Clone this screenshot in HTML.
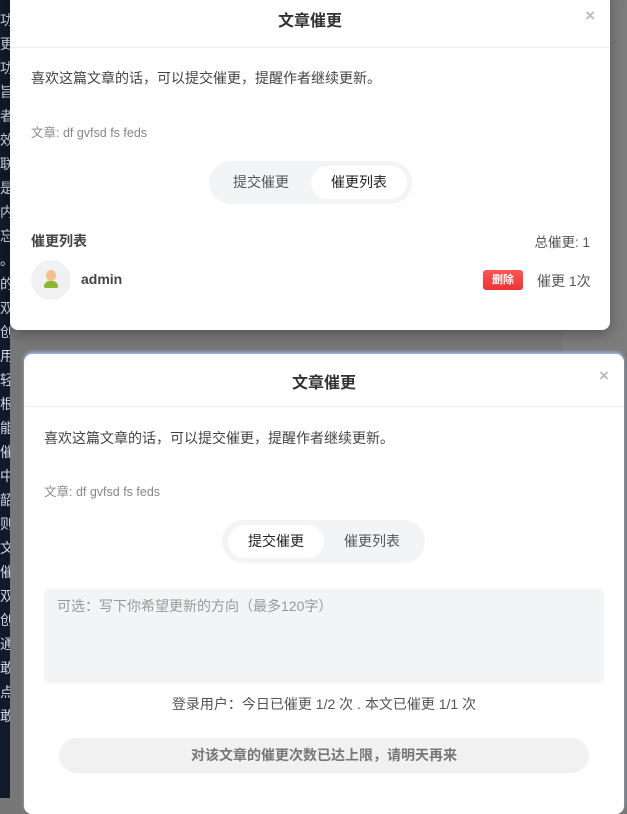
<!DOCTYPE html>
<html><head><meta charset="utf-8"><style>
*{margin:0;padding:0;box-sizing:border-box}
body{width:627px;height:798px;overflow:hidden;background:#777;position:relative;font-family:"Liberation Sans","Noto Sans CJK SC",sans-serif;color:#333}
.left{position:absolute;left:0;top:0;width:10px;height:798px;background:#111a2a;overflow:hidden;color:#cfd8ea;font-size:14px;line-height:24px;padding-top:8px}
.rgt{position:absolute;left:562px;top:0;width:65px;height:354px;background:#7c7c7c}
.m{position:absolute;background:#fff;border-radius:8px;box-shadow:0 4px 14px rgba(0,0,0,.3)}
.t{position:absolute;left:0;right:0;text-align:center;font-size:16px;font-weight:bold;color:#333}
.x{position:absolute;font-size:17px;color:#bbb;font-weight:bold}
.hl{position:absolute;left:0;right:0;height:1px;background:#eee}
.p{position:absolute;font-size:14px;color:#444}
.a{position:absolute;font-size:12.5px;color:#888}
.tabs{position:absolute;background:#f3f4f6;border-radius:22px;width:203px;height:43px}
.tab{position:absolute;top:5px;height:33px;width:96px;line-height:33px;text-align:center;font-size:14px;color:#555;border-radius:17px}
.on{background:#fff;color:#222}
</style></head><body>
<div class="left">功<br>更<br>功<br>旨<br>者<br>效<br>联<br>是<br>内<br>忘<br>。<br>的<br>双<br>创<br>用<br>轻<br>根<br>能<br>催<br>中<br>韶<br>则<br>文<br>催<br>双<br>创<br>通<br>敢<br>点<br>敢</div>
<div class="rgt"></div>
<div class="m" style="left:10px;top:-10px;width:600px;height:340px">
 <div class="t" style="top:17px">文章催更</div>
 <div class="x" style="right:15px;top:16px">×</div>
 <div class="hl" style="top:57px"></div>
 <div class="p" style="left:21px;top:78px">喜欢这篇文章的话，可以提交催更，提醒作者继续更新。</div>
 <div class="a" style="left:21px;top:132px">文章: df gvfsd fs feds</div>
 <div class="tabs" style="left:199px;top:171px"><div class="tab" style="left:4px">提交催更</div><div class="tab on" style="left:102px">催更列表</div></div>
 <div class="p" style="left:21px;top:241px;font-weight:bold">催更列表</div>
 <div class="p" style="right:20px;top:241px;color:#555;font-size:13.5px">总催更: 1</div>
 <div style="position:absolute;left:21px;top:270px;width:40px;height:40px;border-radius:50%;background:#f0f1f3">
  <div style="position:absolute;left:15px;top:10px;width:10px;height:11px;border-radius:50%;background:#f6c08a"></div>
  <div style="position:absolute;left:13px;top:21px;width:14px;height:7px;border-radius:7px 7px 2px 2px;background:#8ab830"></div>
 </div>
 <div class="p" style="left:71px;top:281px;font-weight:bold;color:#444">admin</div>
 <div style="position:absolute;left:473px;top:280px;width:40px;height:20px;border-radius:3px;background:linear-gradient(#f55,#e33);color:#fff;font-size:11px;font-weight:bold;text-align:center;line-height:20px">删除</div>
 <div class="p" style="left:527px;top:281px;color:#555">催更 1次</div>
</div>
<div class="m" style="left:24px;top:354px;width:600px;height:460px;box-shadow:0 -2px 3px #9ab8e8">
 <div class="t" style="top:15px">文章催更</div>
 <div class="x" style="right:15px;top:12px">×</div>
 <div class="hl" style="top:52px"></div>
 <div class="p" style="left:20px;top:74px">喜欢这篇文章的话，可以提交催更，提醒作者继续更新。</div>
 <div class="a" style="left:20px;top:127px">文章: df gvfsd fs feds</div>
 <div class="tabs" style="left:198px;top:166px"><div class="tab on" style="left:6px">提交催更</div><div class="tab" style="left:102px">催更列表</div></div>
 <div style="position:absolute;left:20px;top:235px;width:560px;height:94px;background:#f3f4f5;border-radius:5px;font-size:14px;color:#999;padding:7px 13px">可选：写下你希望更新的方向（最多120字）</div>
 <div class="p" style="left:0;right:0;text-align:center;top:340px;color:#555">登录用户：今日已催更 1/2 次 . 本文已催更 1/1 次</div>
 <div style="position:absolute;left:35px;top:384px;width:530px;height:35px;border-radius:18px;background:#f1f1f1;text-align:center;line-height:35px;font-size:14px;font-weight:bold;color:#777">对该文章的催更次数已达上限，请明天再来</div>
</div>
</body></html>
